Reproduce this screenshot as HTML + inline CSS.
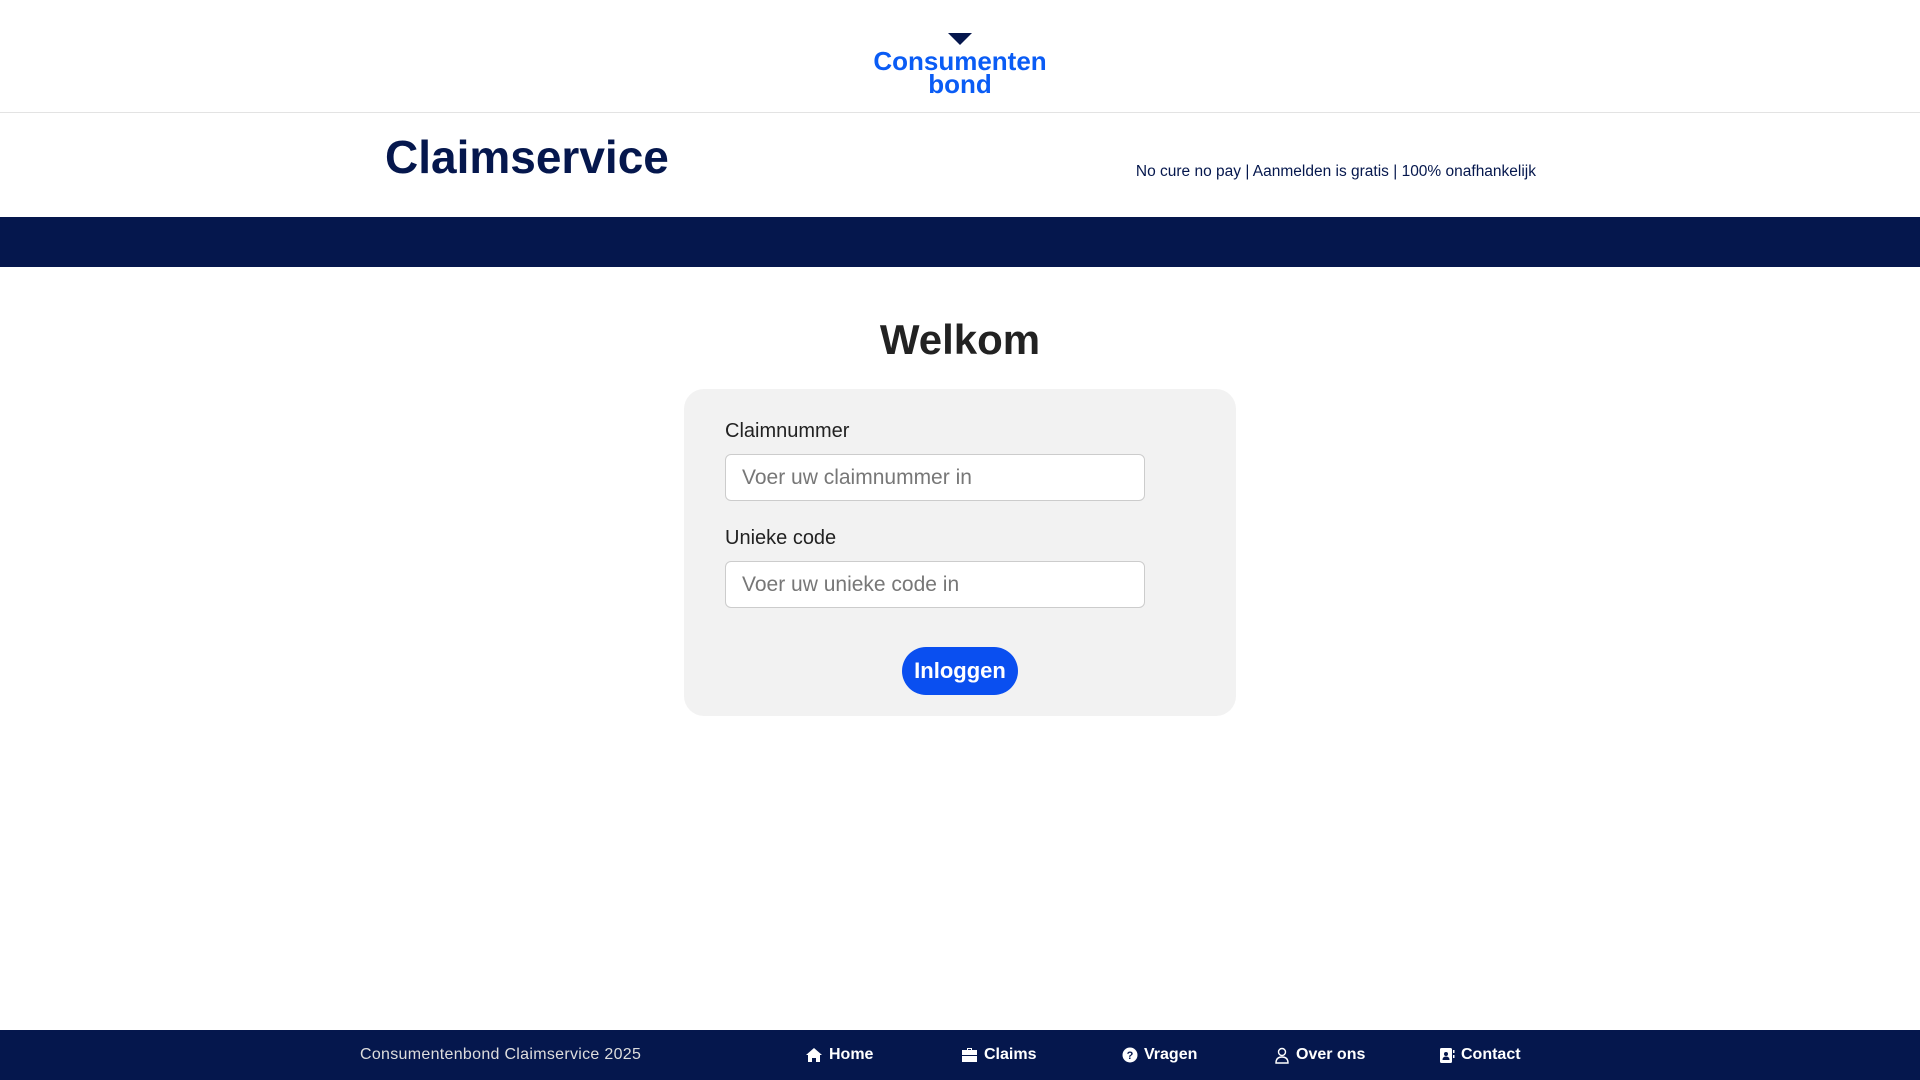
<!DOCTYPE html>
<html><head><meta charset="utf-8"><style>
*{box-sizing:border-box;margin:0;padding:0}
body{width:1920px;height:1080px;position:relative;background:#fff;font-family:"Liberation Sans",sans-serif;overflow:hidden}
.hdr{height:113px;border-bottom:1px solid #e3e3e3;position:relative}
.logo{position:absolute;left:0;width:1920px;top:33px;text-align:center;color:#0a5cf5;font-weight:bold;font-size:26px;line-height:23px;letter-spacing:0}
.tri{width:0;height:0;border-left:12px solid transparent;border-right:12px solid transparent;border-top:12px solid #05174d;margin:0 auto 5px}
.title{position:absolute;left:385px;top:130px;font-size:46px;font-weight:bold;color:#05174d}
.tag{position:absolute;right:384px;top:163px;font-size:15.5px;color:#05174d}
.bar{position:absolute;top:217px;height:50px;width:1920px;background:#05174d}
h1{position:absolute;top:316px;width:1920px;text-align:center;font-size:42px;color:#222}
.card{position:absolute;left:684px;top:389px;width:552px;height:327px;background:#f2f2f2;border-radius:20px}
.lab{position:absolute;left:41px;font-size:20px;color:#222}
.inp{position:absolute;left:41px;width:420px;height:47px;background:#fff;border:1px solid #ccc;border-radius:6px;font-size:21px;color:#777;padding:11px 16px}
.btn{position:absolute;left:218px;top:258px;width:116px;height:48px;border-radius:24px;background:#0a4ff0;color:#fff;font-weight:bold;font-size:22px;text-align:center;line-height:48px}
.ft{position:absolute;top:1030px;height:50px;width:1920px;background:#05174d;color:#fff}
.ft span{position:absolute;top:16px;font-size:16px;font-weight:bold;display:flex;align-items:center;gap:6px}
</style></head><body>
<div class="hdr"><div class="logo"><div class="tri"></div>Consumenten<br>bond</div></div>
<div class="title">Claimservice</div>
<div class="tag">No cure no pay | Aanmelden is gratis | 100% onafhankelijk</div>
<div class="bar"></div>
<h1>Welkom</h1>
<div class="card">
<div class="lab" style="top:31px">Claimnummer</div>
<div class="inp" style="top:65px">Voer uw claimnummer in</div>
<div class="lab" style="top:138px">Unieke code</div>
<div class="inp" style="top:172px">Voer uw unieke code in</div>
<div class="btn">Inloggen</div>
</div>
<div class="ft">
<span style="left:360px;font-weight:normal;font-size:16px;letter-spacing:0.3px;color:#ddd">Consumentenbond Claimservice 2025</span>
<span style="left:805px"><svg width="18" height="16" viewBox="0 0 18 16"><path d="M9 1L1 8h2v7h4v-4h4v4h4V8h2z" fill="#fff"/></svg>Home</span>
<span style="left:961px"><svg width="17" height="16" viewBox="0 0 17 16"><path d="M6 1h5v2h5v5H1V3h5zM7 2v1h3V2zM1 9h15v6H1z" fill="#fff"/></svg>Claims</span>
<span style="left:1122px"><svg width="16" height="16"><circle cx="8" cy="8" r="7.5" fill="#fff"/><text x="8" y="12" font-size="11" text-anchor="middle" fill="#05174d" font-weight="bold">?</text></svg>Vragen</span>
<span style="left:1274px"><svg width="16" height="17" viewBox="0 0 16 17"><circle cx="8" cy="5" r="3.5" fill="none" stroke="#fff" stroke-width="1.4"/><path d="M2 16q0-6 6-6t6 6z" fill="none" stroke="#fff" stroke-width="1.4"/></svg>Over ons</span>
<span style="left:1439px"><svg width="16" height="17" viewBox="0 0 16 17"><rect x="1" y="1" width="12" height="15" rx="1.5" fill="#fff"/><circle cx="7" cy="7" r="2" fill="#05174d"/><path d="M3.5 13q0-3.5 3.5-3.5t3.5 3.5z" fill="#05174d"/><rect x="14" y="3" width="1.5" height="3" fill="#fff"/><rect x="14" y="8" width="1.5" height="3" fill="#fff"/></svg>Contact</span>
</div>
</body></html>
